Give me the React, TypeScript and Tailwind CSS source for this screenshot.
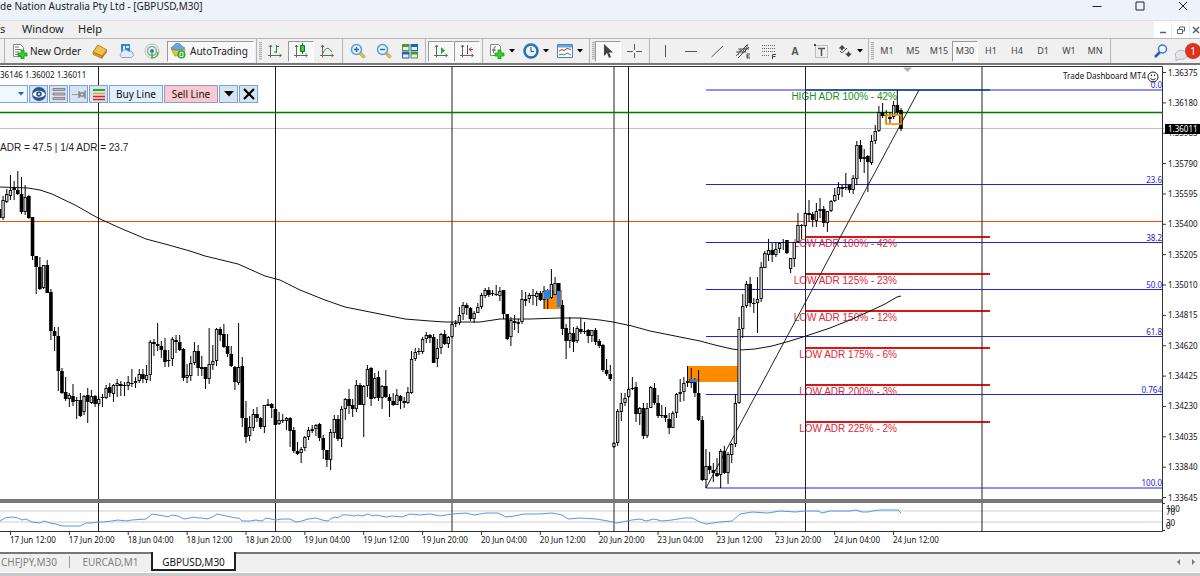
import type { ReactNode } from 'react'
import clsx from 'clsx'

// high, body top, body bottom, low, bullish
type Candle = [number, number, number, number, 0 | 1]

const CANDLES: Candle[] = [
  [209, 209, 218, 218, 0], [196, 200, 218, 220, 1], [189, 194, 202, 203, 1], [175, 190, 196, 200, 1],
  [181, 188, 190, 200, 0], [171, 190, 194, 195, 0], [177, 194, 212, 214, 0], [185, 197, 212, 215, 1],
  [195, 196, 218, 219, 0], [217, 217, 256, 260, 0], [256, 256, 267, 294, 0], [257, 267, 289, 290, 0],
  [265, 265, 288, 289, 1], [260, 265, 293, 293, 0], [289, 292, 331, 340, 0], [327, 331, 336, 351, 0],
  [327, 336, 371, 391, 0], [368, 371, 393, 394, 0], [377, 392, 399, 401, 0], [393, 395, 399, 407, 1],
  [384, 396, 402, 406, 0], [397, 400, 401, 419, 0], [393, 400, 416, 417, 0], [395, 396, 412, 415, 1],
  [388, 395, 402, 423, 0], [390, 396, 403, 404, 1], [395, 396, 404, 407, 0], [396, 399, 404, 406, 1],
  [394, 397, 398, 407, 0], [385, 388, 398, 399, 1], [383, 387, 393, 397, 0], [384, 385, 394, 402, 1],
  [379, 383, 386, 397, 1], [381, 384, 386, 396, 0], [382, 385, 386, 396, 0], [376, 382, 386, 390, 1],
  [369, 383, 383, 387, 0], [377, 381, 383, 388, 1], [369, 374, 381, 383, 1], [369, 374, 379, 383, 0],
  [365, 375, 380, 383, 1], [340, 342, 375, 381, 1], [339, 342, 344, 356, 0], [323, 344, 346, 351, 0],
  [341, 346, 350, 358, 0], [338, 350, 362, 367, 0], [350, 360, 361, 367, 0], [337, 339, 359, 366, 1],
  [335, 340, 342, 353, 0], [335, 342, 350, 351, 0], [348, 349, 378, 381, 0], [364, 375, 378, 383, 1],
  [356, 363, 376, 381, 1], [342, 351, 363, 365, 1], [345, 351, 368, 376, 0], [356, 367, 369, 376, 0],
  [367, 367, 379, 389, 0], [328, 364, 379, 384, 1], [345, 361, 365, 370, 1], [328, 329, 361, 366, 1],
  [327, 329, 335, 341, 0], [324, 334, 347, 348, 0], [334, 346, 354, 357, 0], [346, 354, 366, 367, 0],
  [366, 367, 382, 390, 0], [323, 367, 383, 385, 1], [357, 366, 418, 427, 0], [401, 418, 437, 443, 0],
  [416, 427, 436, 441, 1], [409, 414, 428, 431, 1], [407, 414, 418, 422, 0], [417, 418, 427, 429, 0],
  [405, 405, 427, 433, 1], [399, 404, 406, 406, 1], [403, 404, 408, 418, 0], [407, 409, 425, 425, 0],
  [412, 420, 424, 425, 1], [414, 420, 421, 423, 0], [417, 418, 421, 430, 1], [417, 418, 431, 447, 0],
  [427, 430, 451, 453, 0], [442, 451, 454, 455, 0], [447, 449, 453, 463, 1], [436, 437, 448, 451, 1],
  [427, 430, 437, 440, 1], [425, 429, 431, 433, 1], [424, 425, 429, 436, 1], [423, 424, 438, 441, 0],
  [435, 438, 450, 459, 0], [450, 450, 460, 467, 0], [429, 432, 460, 470, 1], [415, 419, 433, 438, 1],
  [415, 419, 439, 441, 0], [406, 409, 439, 447, 1], [398, 399, 409, 420, 1], [389, 399, 406, 414, 0],
  [399, 405, 409, 417, 0], [380, 385, 409, 412, 1], [383, 385, 405, 405, 0], [385, 386, 405, 437, 1],
  [365, 369, 386, 397, 1], [367, 368, 399, 406, 0], [373, 378, 398, 399, 1], [371, 377, 398, 401, 0],
  [385, 386, 398, 409, 1], [370, 386, 397, 398, 0], [394, 397, 401, 417, 0], [393, 401, 405, 406, 0],
  [389, 395, 405, 405, 1], [395, 396, 401, 409, 0], [397, 401, 403, 408, 0], [387, 392, 403, 404, 1],
  [351, 359, 393, 394, 1], [348, 352, 359, 361, 1], [348, 351, 352, 355, 0], [337, 339, 352, 354, 1],
  [332, 335, 339, 343, 1], [334, 335, 338, 343, 0], [334, 337, 363, 363, 0], [339, 348, 359, 367, 1],
  [333, 334, 348, 354, 1], [330, 334, 344, 345, 0], [336, 337, 344, 348, 1], [322, 324, 337, 338, 1],
  [320, 323, 324, 327, 0], [307, 315, 323, 325, 1], [302, 305, 314, 320, 1], [303, 305, 308, 315, 0],
  [307, 308, 319, 321, 0], [311, 313, 319, 323, 1], [303, 307, 313, 313, 1], [293, 295, 307, 309, 1],
  [288, 290, 296, 298, 1], [287, 290, 295, 297, 0], [290, 293, 294, 296, 0], [285, 294, 295, 296, 0],
  [287, 291, 296, 301, 1], [290, 290, 314, 319, 0], [314, 314, 339, 340, 0], [317, 320, 337, 346, 1],
  [315, 321, 323, 330, 0], [319, 322, 324, 333, 1], [290, 299, 322, 324, 1], [292, 299, 300, 306, 1],
  [293, 295, 299, 303, 1], [289, 295, 296, 305, 0], [291, 293, 297, 306, 1], [291, 293, 300, 301, 0],
  [286, 291, 300, 309, 1], [289, 290, 299, 309, 0], [269, 284, 298, 299, 1], [277, 283, 295, 295, 1],
  [283, 283, 307, 307, 0], [300, 305, 329, 335, 0], [324, 328, 341, 359, 0], [317, 333, 341, 348, 1],
  [327, 333, 342, 352, 0], [326, 328, 341, 343, 1], [318, 329, 332, 334, 0], [322, 331, 332, 334, 0],
  [329, 330, 336, 343, 0], [330, 330, 336, 342, 1], [328, 330, 342, 345, 0], [339, 341, 346, 348, 0],
  [344, 345, 370, 372, 0], [359, 370, 374, 376, 0], [365, 374, 379, 381, 0], [442, 443, 447, 448, 1],
  [409, 411, 443, 446, 1], [393, 403, 412, 421, 1], [393, 398, 403, 406, 1], [387, 389, 397, 398, 1],
  [377, 388, 389, 390, 0], [382, 387, 414, 422, 0], [407, 408, 414, 425, 1], [403, 408, 436, 439, 0],
  [403, 408, 436, 438, 1], [386, 387, 408, 408, 1], [383, 388, 403, 405, 0], [395, 403, 416, 418, 0],
  [405, 415, 416, 418, 0], [407, 415, 418, 422, 0], [413, 419, 428, 434, 0], [411, 413, 428, 428, 1],
  [393, 394, 413, 418, 1], [379, 392, 394, 402, 1], [377, 383, 392, 401, 1], [366, 381, 383, 387, 1],
  [368, 379, 383, 388, 0], [378, 380, 393, 397, 0], [370, 393, 420, 421, 0], [416, 420, 480, 481, 0],
  [449, 466, 480, 488, 1], [452, 466, 470, 474, 0], [463, 470, 473, 482, 0], [458, 473, 476, 477, 0],
  [449, 451, 475, 488, 1], [446, 451, 473, 474, 0], [452, 454, 473, 484, 1], [443, 444, 455, 463, 1],
  [394, 403, 444, 447, 1], [317, 329, 403, 404, 1], [294, 306, 329, 338, 1], [281, 284, 306, 308, 1],
  [277, 284, 303, 307, 0], [298, 303, 304, 313, 0], [277, 299, 303, 333, 1], [262, 267, 299, 302, 1],
  [251, 253, 268, 268, 1], [239, 250, 255, 261, 1], [243, 250, 255, 262, 0], [242, 249, 255, 257, 1],
  [242, 243, 249, 253, 1], [239, 242, 243, 250, 0], [240, 240, 253, 254, 0], [258, 258, 269, 273, 1],
  [242, 242, 259, 267, 1], [213, 225, 242, 243, 1], [224, 225, 226, 239, 0], [212, 213, 226, 227, 1],
  [200, 213, 215, 222, 0], [212, 214, 220, 227, 0], [203, 211, 221, 227, 1], [198, 209, 211, 218, 1],
  [206, 209, 223, 227, 0], [211, 211, 223, 232, 1], [200, 201, 211, 212, 1], [188, 195, 201, 202, 1],
  [182, 187, 195, 200, 1], [185, 187, 189, 197, 0], [173, 187, 188, 190, 0], [184, 185, 190, 193, 0],
  [175, 178, 190, 194, 1], [141, 145, 179, 185, 1], [140, 145, 159, 162, 0], [149, 157, 159, 173, 1],
  [155, 156, 162, 192, 0], [135, 141, 163, 165, 1], [125, 131, 141, 144, 1], [106, 112, 131, 132, 1],
  [103, 112, 116, 118, 0], [110, 115, 116, 123, 0], [112, 117, 119, 123, 0], [101, 105, 117, 119, 1],
  [90, 105, 112, 115, 0], [108, 110, 129, 131, 0],
]

const FIRST_X = -0.6
const STEP_X = 3.68

const MOVING_AVERAGE =
  '0,187 28,188 40,190 52,194 75,205 98,218 120,228 146,239 165,244 190,251 205,256 238,264 265,276 280,280 300,290 325,300 345,307 365,311 385,315 405,319 430,321 445,322 480,322 500,319 530,319 560,318 580,318 600,320 613,322 632,326 650,331 680,337 700,341 715,345 732,349 740,350 755,349 772,346 790,341 806,336 830,328 850,320 870,311 885,304 897,297 901,296'

const OSCILLATOR =
  '0,521 5,518 12,517 18,518 22,520 26,519 32,522 40,523 44,521 50,523 56,524 62,526 80,526 86,523 92,523 98,522 104,522 112,521 118,520 126,521 132,520 146,519 152,514 164,516 168,517 172,515 178,516 184,519 190,518 194,517 198,518 202,518 208,519 214,516 217,514 226,516 236,518 239,518 242,521 250,521 256,520 262,521 266,518 276,520 282,519 290,519 296,522 302,521 308,519 316,518 322,520 328,521 332,518 335,517 338,518 342,515 350,515 354,516 358,515 362,516 368,514 373,516 376,515 386,517 392,516 402,517 410,514 420,515 430,514 440,516 452,514 466,513 474,515 486,513 498,513 506,517 514,516 524,514 540,514 552,513 562,515 568,519 580,518 596,519 608,521 616,523 622,522 632,520 640,519 646,521 654,519 662,521 672,520 684,518 692,518 700,522 706,524 720,522 732,521 740,514 752,512 768,513 780,511 796,512 804,511 818,511 822,513 830,511 840,511 850,511 856,510 862,512 868,512 872,511 880,510 894,510 898,510 901,513'

const SESSION_LINES = [98.5, 275.5, 452, 614, 628.5, 805.5, 982]

const FIB_LEVELS = [
  { y: 90, label: '0.0' },
  { y: 184.5, label: '23.6' },
  { y: 242.5, label: '38.2' },
  { y: 289.5, label: '50.0' },
  { y: 336.5, label: '61.8' },
  { y: 394.5, label: '0.764' },
  { y: 488, label: '100.0' },
]

const ADR_LEVELS = [
  { y: 237, label: 'LOW ADR 100% - 42%' },
  { y: 274, label: 'LOW ADR 125% - 23%' },
  { y: 311, label: 'LOW ADR 150% - 12%' },
  { y: 348, label: 'LOW ADR 175% - 6%' },
  { y: 385, label: 'LOW ADR 200% - 3%' },
  { y: 422, label: 'LOW ADR 225% - 2%' },
]

const PRICES = [
  '1.36375', '1.36180', '1.35985', '1.35790', '1.35595', '1.35400', '1.35205', '1.35010',
  '1.34815', '1.34620', '1.34425', '1.34230', '1.34035', '1.33840', '1.33645',
]

const TIMES = [
  '17 Jun 12:00', '17 Jun 20:00', '18 Jun 04:00', '18 Jun 12:00', '18 Jun 20:00', '19 Jun 04:00',
  '19 Jun 12:00', '19 Jun 20:00', '20 Jun 04:00', '20 Jun 12:00', '20 Jun 20:00', '23 Jun 04:00',
  '23 Jun 12:00', '23 Jun 20:00', '24 Jun 04:00', '24 Jun 12:00',
]

const TIMEFRAMES = ['M1', 'M5', 'M15', 'M30', 'H1', 'H4', 'D1', 'W1', 'MN']

function PriceChart() {
  return (
    <svg
      viewBox="0 65 1200 487"
      className="block h-auto w-full bg-white font-['Noto_Sans',sans-serif] text-[8px]"
      role="img"
      aria-label="GBPUSD M30 chart"
    >
      {/* zones */}
      <rect x="687" y="366" width="51" height="16" fill="#ff8c00" />
      <rect x="544" y="290" width="18" height="19" fill="#ff8c00" />

      {/* oscillator levels */}
      <path d="M0 511H1162M0 522H1162" stroke="#cfcfcf" />

      <path d="M0 128.5H1164" stroke="#c0c0c0" />
      <path d="M0 221.5H1162" stroke="#ff4500" />
      {FIB_LEVELS.map((level) => (
        <g key={level.label}>
          <path d={`M706 ${level.y}H1162`} stroke="#2222dd" />
          <text x="1162" y={level.y - 2} textAnchor="end" fill="#2222dd">
            {level.label}
          </text>
        </g>
      ))}

      <g className="font-['Liberation_Sans',sans-serif] text-[10px]">
        <text x="897" y="100" textAnchor="end" fill="#228b22">
          HIGH ADR 100% - 42%
        </text>
        {ADR_LEVELS.map((level) => (
          <g key={level.label}>
            <path d={`M805 ${level.y}H990`} stroke="#dd1515" strokeWidth="2" />
            <text x="897" y={level.y + 10} textAnchor="end" fill="#dc2838">
              {level.label}
            </text>
          </g>
        ))}
        <text x="0" y="151" fill="#222">
          ADR = 47.5 | 1/4 ADR = 23.7
        </text>
      </g>

      {SESSION_LINES.map((x) => (
        <path key={x} d={`M${x} 67V531`} stroke="#222" />
      ))}
      <path d="M0 112.5H1162" stroke="#007800" strokeWidth="1.6" />
      <path d="M805 90H990" stroke="#0b4a80" strokeWidth="1.6" />

      <polyline points={MOVING_AVERAGE} fill="none" stroke="#111" />
      <path d="M706 488L919 90" stroke="#222" />

      {CANDLES.map(([high, top, bottom, low, bullish], i) => {
        const x = FIRST_X + i * STEP_X
        const height = Math.max(bottom - top, 1)
        return (
          <g key={i}>
            <path d={`M${x} ${high}V${low}`} stroke="#000" />
            {bullish ? (
              <rect x={x - 1.2} y={top + 0.5} width="2.4" height={Math.max(height - 1, 1)} fill="#ddd" stroke="#000" strokeWidth="0.9" />
            ) : (
              <rect x={x - 1.8} y={top} width="3.6" height={height} fill="#000" />
            )}
          </g>
        )
      })}
      <path d="M544 291h2.500v8h-2.500zM546 290h4v9h-4zM557 291h4v16h-4zM690 379h7v3h-7z" fill="#2f80e8" />
      <rect x="886" y="115" width="15" height="9" fill="none" stroke="#ff8c00" strokeWidth="1.6" />
      <path d="M903 67.500h9l-4.500 4.500z" fill="#b0b0b0" />

      <polyline points={OSCILLATOR} fill="none" stroke="#4f9be6" />

      {/* frame */}
      <path d="M0 501H1162" stroke="#777" strokeWidth="4" />
      <path d="M0 66.500H1162.500V531.500H0" fill="none" stroke="#333" />

      <text x="0" y="78" fill="#111">36146 1.36002 1.36011</text>
      <text x="1146" y="79" textAnchor="end" fill="#111">
        Trade Dashboard MT4
      </text>
      <g fill="none" stroke="#222">
        <circle cx="1153" cy="77" r="5" />
        <path d="M1150.500 78.500q2.500 3 5 0M1151.500 74.500v1.500M1154.500 74.500v1.500" />
      </g>

      {/* price scale */}
      {PRICES.map((price, i) => {
        const y = 72.5 + i * 30.36
        return (
          <g key={price}>
            <path d={`M1163 ${y}h3`} stroke="#333" />
            <text x="1168" y={y + 3} fill="#111">{price}</text>
          </g>
        )
      })}
      <rect x="1165" y="124" width="35" height="10" fill="#000" />
      <text x="1168" y="132" fill="#fff">1.36011</text>
      <g fill="#111">
        <text x="1166" y="512">100</text>
        <text x="1166" y="515">70</text>
        <text x="1166" y="526">30</text>
        <text x="1166" y="529">0</text>
      </g>
      <path d="M1163 503.500h2M1163 530.500h2" stroke="#333" />

      {/* time scale */}
      {TIMES.map((time, i) => {
        const x = 10 + i * 58.87
        return (
          <g key={time}>
            <path d={`M${x + 0.5} 532v3`} stroke="#333" />
            <text x={x} y="543" fill="#111">{time}</text>
          </g>
        )
      })}
    </svg>
  )
}

function Separator() {
  return <div className="mx-[2px] w-px self-stretch bg-[#b4b4b4]" />
}

function Grip() {
  return <div className="h-[18px] w-[3px] bg-[repeating-linear-gradient(#b0b0b0_0_1px,#e4e4e4_1px_2px)]" />
}

interface ToolButtonProps {
  label: string
  pressed?: boolean
  dropdown?: boolean
  children: ReactNode
}

function ToolButton({ label, pressed, dropdown, children }: ToolButtonProps) {
  return (
    <button
      type="button"
      aria-label={label}
      className={clsx(
        'flex h-[21px] shrink-0 items-center justify-center',
        dropdown ? 'w-[34px] gap-1' : 'w-[26px]',
        pressed && 'border border-r-white border-b-white border-t-[#9a9a9a] border-l-[#9a9a9a] bg-[#f8f8f8]',
      )}
    >
      {children}
      {dropdown && <Caret />}
    </button>
  )
}

function Caret() {
  return (
    <svg viewBox="0 0 6 4" className="h-1 w-1.5 shrink-0">
      <path d="M0 0h6L3 3.500z" fill="#000" />
    </svg>
  )
}

function Icon({ children }: { children: ReactNode }) {
  return (
    <svg viewBox="0 0 16 16" className="h-4 w-4 shrink-0" fill="none" aria-hidden>
      {children}
    </svg>
  )
}

const AXES = 'M3.500 2v12.500M1 12.500h13M2 4l1.500-2L5 4M12.500 11l2 1.500-2 1.500'
const PLUS = 'M9 7h3v3h3v3h-3v3H9v-3H6v-3h3z'

function Magnifier({ plus }: { plus?: boolean }) {
  return (
    <Icon>
      <path d="M10 10l4.500 4.500" stroke="#9a7a20" strokeWidth="3" />
      <path d="M10 10l4.500 4.500" stroke="#e8c640" strokeWidth="2" />
      <circle cx="6.500" cy="6.500" r="5" fill="#e4f2fd" stroke="#5b9bd8" strokeWidth="1.500" />
      <path d={plus ? 'M4 6.500h5M6.500 4v5' : 'M4 6.500h5'} stroke="#2b6fb5" strokeWidth="1.500" />
    </Icon>
  )
}

function Toolbar() {
  return (
    <div className="flex h-[25px] items-center overflow-hidden border-t border-[#b9b9b9] bg-[#f0f0f0] pl-[2px] text-[#222]">
      <Separator />
      <button type="button" className="flex h-[21px] w-20 shrink-0 items-center gap-0.5 pl-[5px] text-[10px] whitespace-nowrap">
        <Icon>
          <path d="M1.500 1.500h7l3 3v9h-10z" fill="#fff" stroke="#888" />
          <path d="M3 4h4M3 6.500h6M3 9h4M3 11.500h3" stroke="#777" />
          <path d={PLUS} fill="#2fd02f" stroke="#118811" strokeWidth="0.700" />
        </Icon>
        New Order
      </button>
      <ToolButton label="MetaEditor">
        <Icon>
          <path d="M1 9l5-7 9 5-5 6z" fill="#f0c048" stroke="#b8801c" />
          <path d="M1 9l9 4v2.500L1 11.500z" fill="#d69a28" stroke="#a8701c" strokeWidth="0.600" />
          <path d="M10 13l5-6v2l-5 6.500z" fill="#b87818" />
        </Icon>
      </ToolButton>
      <ToolButton label="Virtual hosting">
        <Icon>
          <path d="M3 1h9v8H3z" fill="#2f86d8" />
          <path d="M5 3h2v5H5zM8 3h3v2H8z" fill="#d5eafc" />
          <path d="M3.500 14.500a3 3 0 010-5 4 4 0 017-1 3 3 0 013 6z" fill="#e2ecf7" stroke="#8ba6c4" />
        </Icon>
      </ToolButton>
      <ToolButton label="Signals">
        <Icon>
          <circle cx="8" cy="8" r="7" stroke="#b3bfc6" />
          <circle cx="8" cy="8" r="4.500" stroke="#83b78c" strokeWidth="1.500" />
          <circle cx="8" cy="8" r="2" fill="#3c78b4" />
          <path d="M8 9v6c4 0 6-3 6-6" stroke="#4eb254" strokeWidth="1.500" />
        </Icon>
      </ToolButton>
      <button
        type="button"
        className="ml-[2px] flex h-[21px] w-[87px] shrink-0 items-center gap-1 border border-t-[#9a9a9a] border-r-white border-b-white border-l-[#9a9a9a] bg-[#f8f8f8] pl-0.5 text-[10px]"
      >
        <Icon>
          <path d="M1 6l4 7h8l2-7z" fill="#e8c23a" stroke="#a98316" strokeWidth="0.600" />
          <path d="M1 5c2-2 3-2 4-4 2-1 5-1 6 1 1 2 3 2 4 3-3 3-11 3-14 0z" fill="#65a9dd" stroke="#3478b0" strokeWidth="0.600" />
          <circle cx="11.500" cy="11.500" r="4" fill="#22ad22" />
          <path d="M10 9.500h3v4h-3z" stroke="#fff" />
        </Icon>
        AutoTrading
      </button>
      <Separator />
      <Grip />
      <ToolButton label="Bar chart">
        <Icon>
          <path d={AXES} stroke="#666" />
          <path d="M9.500 2v8M9.500 3.500h2.500M7 9h2.500" stroke="#24853a" />
        </Icon>
      </ToolButton>
      <ToolButton label="Candlesticks" pressed>
        <Icon>
          <path d={AXES} stroke="#666" />
          <path d="M9.500 0v11" stroke="#157a25" />
          <path d="M7.500 2.500h4v6h-4z" fill="#3ecb4c" stroke="#157a25" />
        </Icon>
      </ToolButton>
      <ToolButton label="Line chart">
        <Icon>
          <path d={AXES} stroke="#666" />
          <path d="M4 10c2-5 5-7 9-1" stroke="#3f9650" />
        </Icon>
      </ToolButton>
      <Separator />
      <ToolButton label="Zoom in">
        <Magnifier plus />
      </ToolButton>
      <ToolButton label="Zoom out">
        <Magnifier />
      </ToolButton>
      <ToolButton label="Tile windows">
        <Icon>
          <path d="M0 1h7.500v7H0zM8.500 8.500H16v7H8.500z" fill="#4f9a28" />
          <path d="M8.500 1H16v7H8.500zM0 8.500h7.500v7H0z" fill="#2a5fb8" />
          <path d="M1 4h5.500v3H1zM9.500 4H15v3H9.500zM1 11.500h5.500v3H1zM9.500 11.500H15v3H9.500z" fill="#e3eef9" />
        </Icon>
      </ToolButton>
      <Separator />
      <ToolButton label="Auto scroll" pressed>
        <Icon>
          <path d={AXES} stroke="#666" />
          <path d="M8 4l4 3.500L8 11z" fill="#28a83c" />
        </Icon>
      </ToolButton>
      <ToolButton label="Chart shift" pressed>
        <Icon>
          <path d={AXES} stroke="#666" />
          <path d="M8.500 2v9" stroke="#555" />
          <path d="M14 6.500H10M12.500 4.500l-2.500 2 2.500 2" stroke="#b83a28" />
        </Icon>
      </ToolButton>
      <Separator />
      <ToolButton label="Indicators" dropdown>
        <Icon>
          <path d="M1.500 1.500h8l2 2v9h-10z" fill="#fff" stroke="#888" />
          <path d="M7 4c-2-1-2 1-2.500 6M3 7h4" stroke="#555" />
          <path d={PLUS} fill="#2fd02f" stroke="#118811" strokeWidth="0.700" />
        </Icon>
      </ToolButton>
      <ToolButton label="Periods" dropdown>
        <Icon>
          <circle cx="8" cy="8" r="6.500" fill="#edf5fc" stroke="#2471c0" strokeWidth="2.500" />
          <path d="M8 4v4.500h3" stroke="#444" />
        </Icon>
      </ToolButton>
      <ToolButton label="Templates" dropdown>
        <Icon>
          <path d="M0.500 1.500h15v13H.5z" fill="#fff" stroke="#4a80b8" />
          <path d="M1 2h14v2.500H1z" fill="#6aa5dc" />
          <path d="M2 8l3-1.500 2 1 3-2 4 1" stroke="#963c30" />
          <path d="M2 12l3-1 2 1 3-2 4 2" stroke="#3b9a45" />
        </Icon>
      </ToolButton>
      <Separator />
      <Grip />
      <ToolButton label="Cursor" pressed>
        <Icon>
          <path d="M4 1v12l3-3 2 5 2-1-2-4.500h4z" fill="#444" />
        </Icon>
      </ToolButton>
      <ToolButton label="Crosshair">
        <Icon>
          <path d="M8.500 1v6M8.500 10v5M1 8.500h6M10 8.500h6" stroke="#555" />
        </Icon>
      </ToolButton>
      <Separator />
      <ToolButton label="Vertical line">
        <Icon>
          <path d="M8.500 2v12" stroke="#555" />
        </Icon>
      </ToolButton>
      <ToolButton label="Horizontal line">
        <Icon>
          <path d="M2 8.500h12" stroke="#555" />
        </Icon>
      </ToolButton>
      <ToolButton label="Trendline">
        <Icon>
          <path d="M2.500 14L14 3" stroke="#555" />
        </Icon>
      </ToolButton>
      <ToolButton label="Equidistant channel">
        <Icon>
          <path d="M1 13L12 2M3 15L14 4M1 9h10M3 6h11M3 12L6 6M7 11l3-7M10 9l3-8" stroke="#555" />
          <path d="M15 11h-3v4h3M12 13h2.500" stroke="#444" />
        </Icon>
      </ToolButton>
      <ToolButton label="Fibonacci retracement">
        <Icon>
          <path d="M1 2.500h14M1 5.500h14M1 8.500h14M1 12.500h8" stroke="#666" strokeDasharray="1 1" />
          <path d="M11.500 16v-4.500H15M11.500 13.500h3" stroke="#444" />
        </Icon>
      </ToolButton>
      <ToolButton label="Text">
        <span className="text-[10px] font-bold text-[#555]">A</span>
      </ToolButton>
      <ToolButton label="Text label">
        <Icon>
          <path d="M2.500 2.500h12v12h-12z" stroke="#888" strokeDasharray="1 1" />
          <path d="M1 1h2v2H1z" fill="#444" />
          <path d="M5 5.500h7M8.500 5v8" stroke="#555" strokeWidth="1.500" />
        </Icon>
      </ToolButton>
      <button type="button" aria-label="Arrows" className="flex h-[21px] w-8 shrink-0 items-center justify-center gap-1">
        <Icon>
          <path d="M5 2l3.500 3.500H6.500L5 8 3.500 5.500h-2z" fill="#444" />
          <path d="M11.500 14L8 10.500h2L11.500 8 13 10.500h2z" fill="#444" />
          <path d="M3 8l2 2 5-5" stroke="#555" />
        </Icon>
        <Caret />
      </button>
      <Separator />
      <Grip />
      {TIMEFRAMES.map((tf) => (
        <button
          key={tf}
          type="button"
          className={clsx(
            'h-[21px] w-[26px] shrink-0 border text-center text-[9px] text-[#444]',
            tf === 'M30'
              ? 'border-t-[#9a9a9a] border-r-white border-b-white border-l-[#9a9a9a] bg-[#f8f8f8]'
              : 'border-transparent',
          )}
        >
          {tf}
        </button>
      ))}
      <Separator />
      <div className="ml-auto flex shrink-0 items-center">
        <ToolButton label="Search">
          <Icon>
            <path d="M7 9l-5 5" stroke="#2457c8" strokeWidth="2.500" />
            <circle cx="9.500" cy="6" r="4" fill="#f4f8ff" stroke="#4076d8" strokeWidth="1.500" />
          </Icon>
        </ToolButton>
        <button type="button" aria-label="Notifications" className="relative h-[21px] w-[26px]">
          <svg viewBox="0 0 16 16" className="mt-1 h-4 w-4" fill="none" aria-hidden>
            <path d="M2 12a6 4.500 0 113 2l-3 2z" fill="#e6e6ea" stroke="#b5b5bb" />
          </svg>
          <span className="absolute top-0.5 left-[11px] h-4 w-4 rounded-full bg-[#dc3220] text-[10px] leading-4 text-white">1</span>
        </button>
      </div>
    </div>
  )
}

function PanelButton({ label, children }: { label: string; children: ReactNode }) {
  return (
    <button type="button" aria-label={label} className="flex h-[18px] w-[19px] items-center justify-center border border-[#7d9fe8] bg-[#d6e4f2]">
      {children}
    </button>
  )
}

function TradePanel() {
  return (
    <div className="absolute top-5 left-0 flex gap-px text-[10px] text-[#111]">
      <button type="button" aria-label="Select" className="flex h-[18px] w-7 items-center justify-end border border-l-0 border-[#7d9fe8] bg-[#eff7ff] pr-[3px]">
        <svg viewBox="0 0 6 4" className="h-1 w-1.5">
          <path d="M0 0h6L3 3.500z" fill="#1c5fd0" />
        </svg>
      </button>
      <PanelButton label="Show lines">
        <Icon>
          <circle cx="8" cy="8" r="7" fill="#2b568c" />
          <path d="M1.500 8.500c3-5 10-5 13 0-3 4-10 4-13 0z" fill="#fff" />
          <circle cx="8" cy="8" r="2.800" fill="#2b568c" />
          <circle cx="8" cy="8" r="1" fill="#fff" />
        </Icon>
      </PanelButton>
      <PanelButton label="List">
        <Icon>
          <path d="M2 2.500h12v2H2zM2 7h12v2H2zM2 11.500h12v2H2z" fill="#bbb" stroke="#777" strokeWidth="0.800" />
        </Icon>
      </PanelButton>
      <PanelButton label="Pin">
        <Icon>
          <path d="M1 8.500h7" stroke="#999" />
          <path d="M8 5v7M9 7h4v3H9zM14 4.500v8" stroke="#888" strokeWidth="1.500" />
        </Icon>
      </PanelButton>
      <PanelButton label="Levels">
        <Icon>
          <path d="M2 4h12" stroke="#25a52f" strokeWidth="2" />
          <path d="M2 7.500h12" stroke="#f0a020" strokeWidth="1.500" />
          <path d="M2 10.500h12M2 13.500h12" stroke="#e02020" strokeWidth="1.500" />
        </Icon>
      </PanelButton>
      <button type="button" className="h-[18px] w-[54px] border border-[#7d9fe8] bg-[#e2effd] leading-4">
        Buy Line
      </button>
      <button type="button" className="h-[18px] w-[54px] border border-[#7d9fe8] bg-[#fcc9cd] leading-4">
        Sell Line
      </button>
      <PanelButton label="More">
        <svg viewBox="0 0 10 6" className="h-1.5 w-2.5">
          <path d="M0 0h10L5 5.500z" fill="#000" />
        </svg>
      </PanelButton>
      <PanelButton label="Close panel">
        <Icon>
          <path d="M3 3l10 10M13 3L3 13" stroke="#000" strokeWidth="2.200" />
        </Icon>
      </PanelButton>
    </div>
  )
}

export default function App() {
  return (
    <div className="w-full overflow-hidden bg-white font-['Noto_Sans',sans-serif]">
      <header className="flex h-5 items-start bg-[#edf3fb] text-[#222]">
        <h1 className="text-[10px] leading-3 whitespace-nowrap">de Nation Australia Pty Ltd - [GBPUSD,M30]</h1>
        <div className="-mr-1 ml-auto flex">
          <button type="button" aria-label="Minimize" className="flex h-3 w-[43px] items-center justify-center">
            <svg viewBox="0 0 10 10" className="h-2.5 w-2.5" fill="none">
              <path d="M.5 5.500h9" stroke="#222" />
            </svg>
          </button>
          <button type="button" aria-label="Maximize" className="flex h-3 w-[43px] items-center justify-center">
            <svg viewBox="0 0 10 10" className="h-2.5 w-2.5" fill="none">
              <path d="M1 1h8v8H1z" stroke="#222" />
            </svg>
          </button>
          <button type="button" aria-label="Close" className="flex h-3 w-[43px] items-center justify-center">
            <svg viewBox="0 0 10 10" className="h-2.5 w-2.5" fill="none">
              <path d="M1 1l8 8M9 1L1 9" stroke="#222" />
            </svg>
          </button>
        </div>
      </header>

      <nav className="flex h-[18px] items-start border-t border-[#dde1e6] bg-[#f0f0f0] text-[11px] leading-4 text-[#222]">
        <button type="button" className="w-[22px] text-left">s</button>
        <button type="button" className="w-14 text-left">Window</button>
        <button type="button">Help</button>
        <div className="ml-auto flex h-full gap-px">
          <button type="button" aria-label="Minimize chart" className="flex w-[17px] items-center justify-center bg-white">
            <svg viewBox="0 0 8 8" className="h-2 w-2" fill="none">
              <path d="M1 6.500h6" stroke="#4f6478" strokeWidth="1.500" />
            </svg>
          </button>
          <button type="button" aria-label="Restore chart" className="flex w-[17px] items-center justify-center bg-white">
            <svg viewBox="0 0 8 8" className="h-2 w-2" fill="none">
              <path d="M2.500 3V1h5v4H6M.5 3.500h5v4h-5z" stroke="#4f6478" />
            </svg>
          </button>
          <button type="button" aria-label="Close chart" className="flex w-2.5 items-center justify-end overflow-hidden bg-white">
            <svg viewBox="0 0 8 8" className="h-2 w-2" fill="none">
              <path d="M1 1l6 6M7 1L1 7" stroke="#4f6478" strokeWidth="1.500" />
            </svg>
          </button>
        </div>
      </nav>

      <Toolbar />

      <main className="relative border-t-2 border-[#777]">
        <PriceChart />
        <TradePanel />
      </main>

      <footer className="flex h-[20px] items-start border-t-2 border-[#777] bg-[#f0f0f0] text-[10px] leading-4 text-[#808080]">
        <button type="button" className="flex w-[70px] items-center justify-between pl-px">
          CHFJPY,M30
          <span className="h-3 w-px bg-[#999]" />
        </button>
        <button type="button" className="w-[81px]">EURCAD,M1</button>
        <button type="button" className="-mt-0.5 h-[19px] w-[85px] border-2 border-t-0 border-[#222] bg-white pt-0.5 leading-4 text-[#111]">
          GBPUSD,M30
        </button>
        <div className="ml-auto flex h-4 items-center gap-2.5 pr-1">
          <button type="button" aria-label="Scroll tabs left">
            <svg viewBox="0 0 5 6" className="h-1.5 w-[5px]">
              <path d="M4 0v6L1 3z" fill="#777" />
            </svg>
          </button>
          <button type="button" aria-label="Scroll tabs right">
            <svg viewBox="0 0 5 6" className="h-1.5 w-[5px]">
              <path d="M1 0v6l3-3z" fill="#777" />
            </svg>
          </button>
        </div>
      </footer>
      <div className="h-1 border-t border-white bg-[#cacaca]" />
    </div>
  )
}
